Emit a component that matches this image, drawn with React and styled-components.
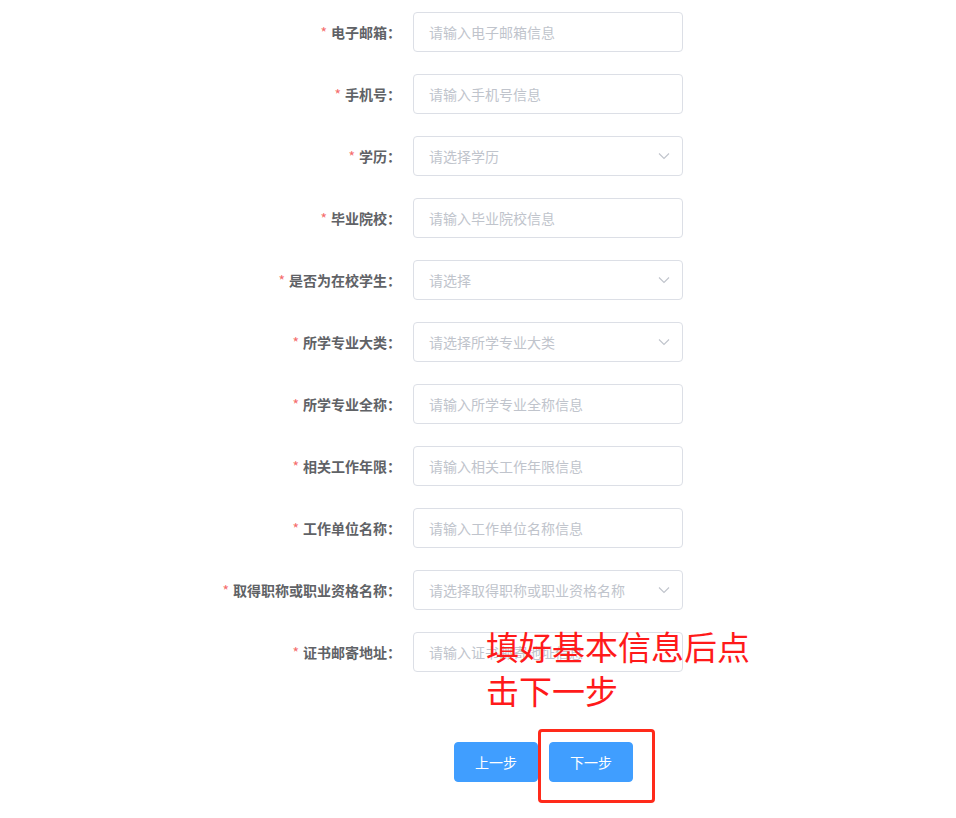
import React from "react";
import styled, { createGlobalStyle } from "styled-components";

const Global = createGlobalStyle`
  html, body { margin: 0; padding: 0; background: #fff; }
  body { font-family: "Noto Sans CJK SC", "Noto Sans", sans-serif; }
  * { box-sizing: border-box; }
`;

const Page = styled.div`
  position: relative;
  width: 956px;
  height: 818px;
  overflow: hidden;
  background: #fff;
`;

const Form = styled.form`
  display: flex;
  flex-direction: column;
  gap: 22px;
  padding: 12px 0 0 0;
`;

const Row = styled.div`
  display: flex;
  align-items: center;
  height: 40px;
`;

const Label = styled.label`
  width: 413px;
  padding-right: 12px;
  text-align: right;
  font-size: 14px;
  font-weight: 700;
  color: #606266;
  white-space: nowrap;
  margin-top: -1px;
`;

const Star = styled.span`
  color: #f56c6c;
  margin-right: 4px;
  font-weight: 400;
`;

const Field = styled.div`
  position: relative;
  width: 270px;
  height: 40px;
  border: 1px solid #dcdfe6;
  border-radius: 4px;
  display: flex;
  align-items: center;
  padding: 0 15px;
  font-size: 14px;
  color: #c0c4cc;
  justify-content: space-between;
`;

const Placeholder = styled.span`
  margin-top: -1px;
`;

const Arrow = styled.svg`
  width: 14px;
  height: 14px;
  margin-right: -4px;
  color: #c0c4cc;
`;

const Buttons = styled.div`
  display: flex;
  gap: 11px;
  padding-left: 454px;
  margin-top: 70px;
`;

const Button = styled.button`
  width: 84px;
  height: 40px;
  border: 1px solid #409eff;
  background: #409eff;
  color: #fff;
  border-radius: 4px;
  font-size: 14px;
  font-family: "Noto Sans CJK SC", sans-serif;
  padding: 0;
`;

const Note = styled.div`
  position: absolute;
  left: 486px;
  top: 624px;
  width: 280px;
  font-size: 33px;
  line-height: 44px;
  color: #ff1a1a;
  font-family: "Noto Sans CJK SC", sans-serif;
  font-weight: 400;
`;

const Highlight = styled.div`
  position: absolute;
  left: 538px;
  top: 729px;
  width: 117px;
  height: 74px;
  border: 3px solid #ff2a1a;
  border-radius: 4px;
`;

const fields = [
  ["电子邮箱", "请输入电子邮箱信息", false],
  ["手机号", "请输入手机号信息", false],
  ["学历", "请选择学历", true],
  ["毕业院校", "请输入毕业院校信息", false],
  ["是否为在校学生", "请选择", true],
  ["所学专业大类", "请选择所学专业大类", true],
  ["所学专业全称", "请输入所学专业全称信息", false],
  ["相关工作年限", "请输入相关工作年限信息", false],
  ["工作单位名称", "请输入工作单位名称信息", false],
  ["取得职称或职业资格名称", "请选择取得职称或职业资格名称", true],
  ["证书邮寄地址", "请输入证书邮寄地址信息", false],
];

export default function App() {
  return (
    <Page>
      <Global />
      <Form>
        {fields.map(([label, ph, sel]) => (
          <Row key={label}>
            <Label>
              <Star>*</Star>
              {label}：
            </Label>
            <Field>
              <Placeholder>{ph}</Placeholder>
              {sel && (
                <Arrow viewBox="0 0 14 14" fill="none">
                  <path d="M2 4.5 L7 9.5 L12 4.5" stroke="currentColor" strokeWidth="1.1" />
                </Arrow>
              )}
            </Field>
          </Row>
        ))}
      </Form>
      <Buttons>
        <Button type="button">上一步</Button>
        <Button type="button">下一步</Button>
      </Buttons>
      <Note>填好基本信息后点击下一步</Note>
      <Highlight />
    </Page>
  );
}
